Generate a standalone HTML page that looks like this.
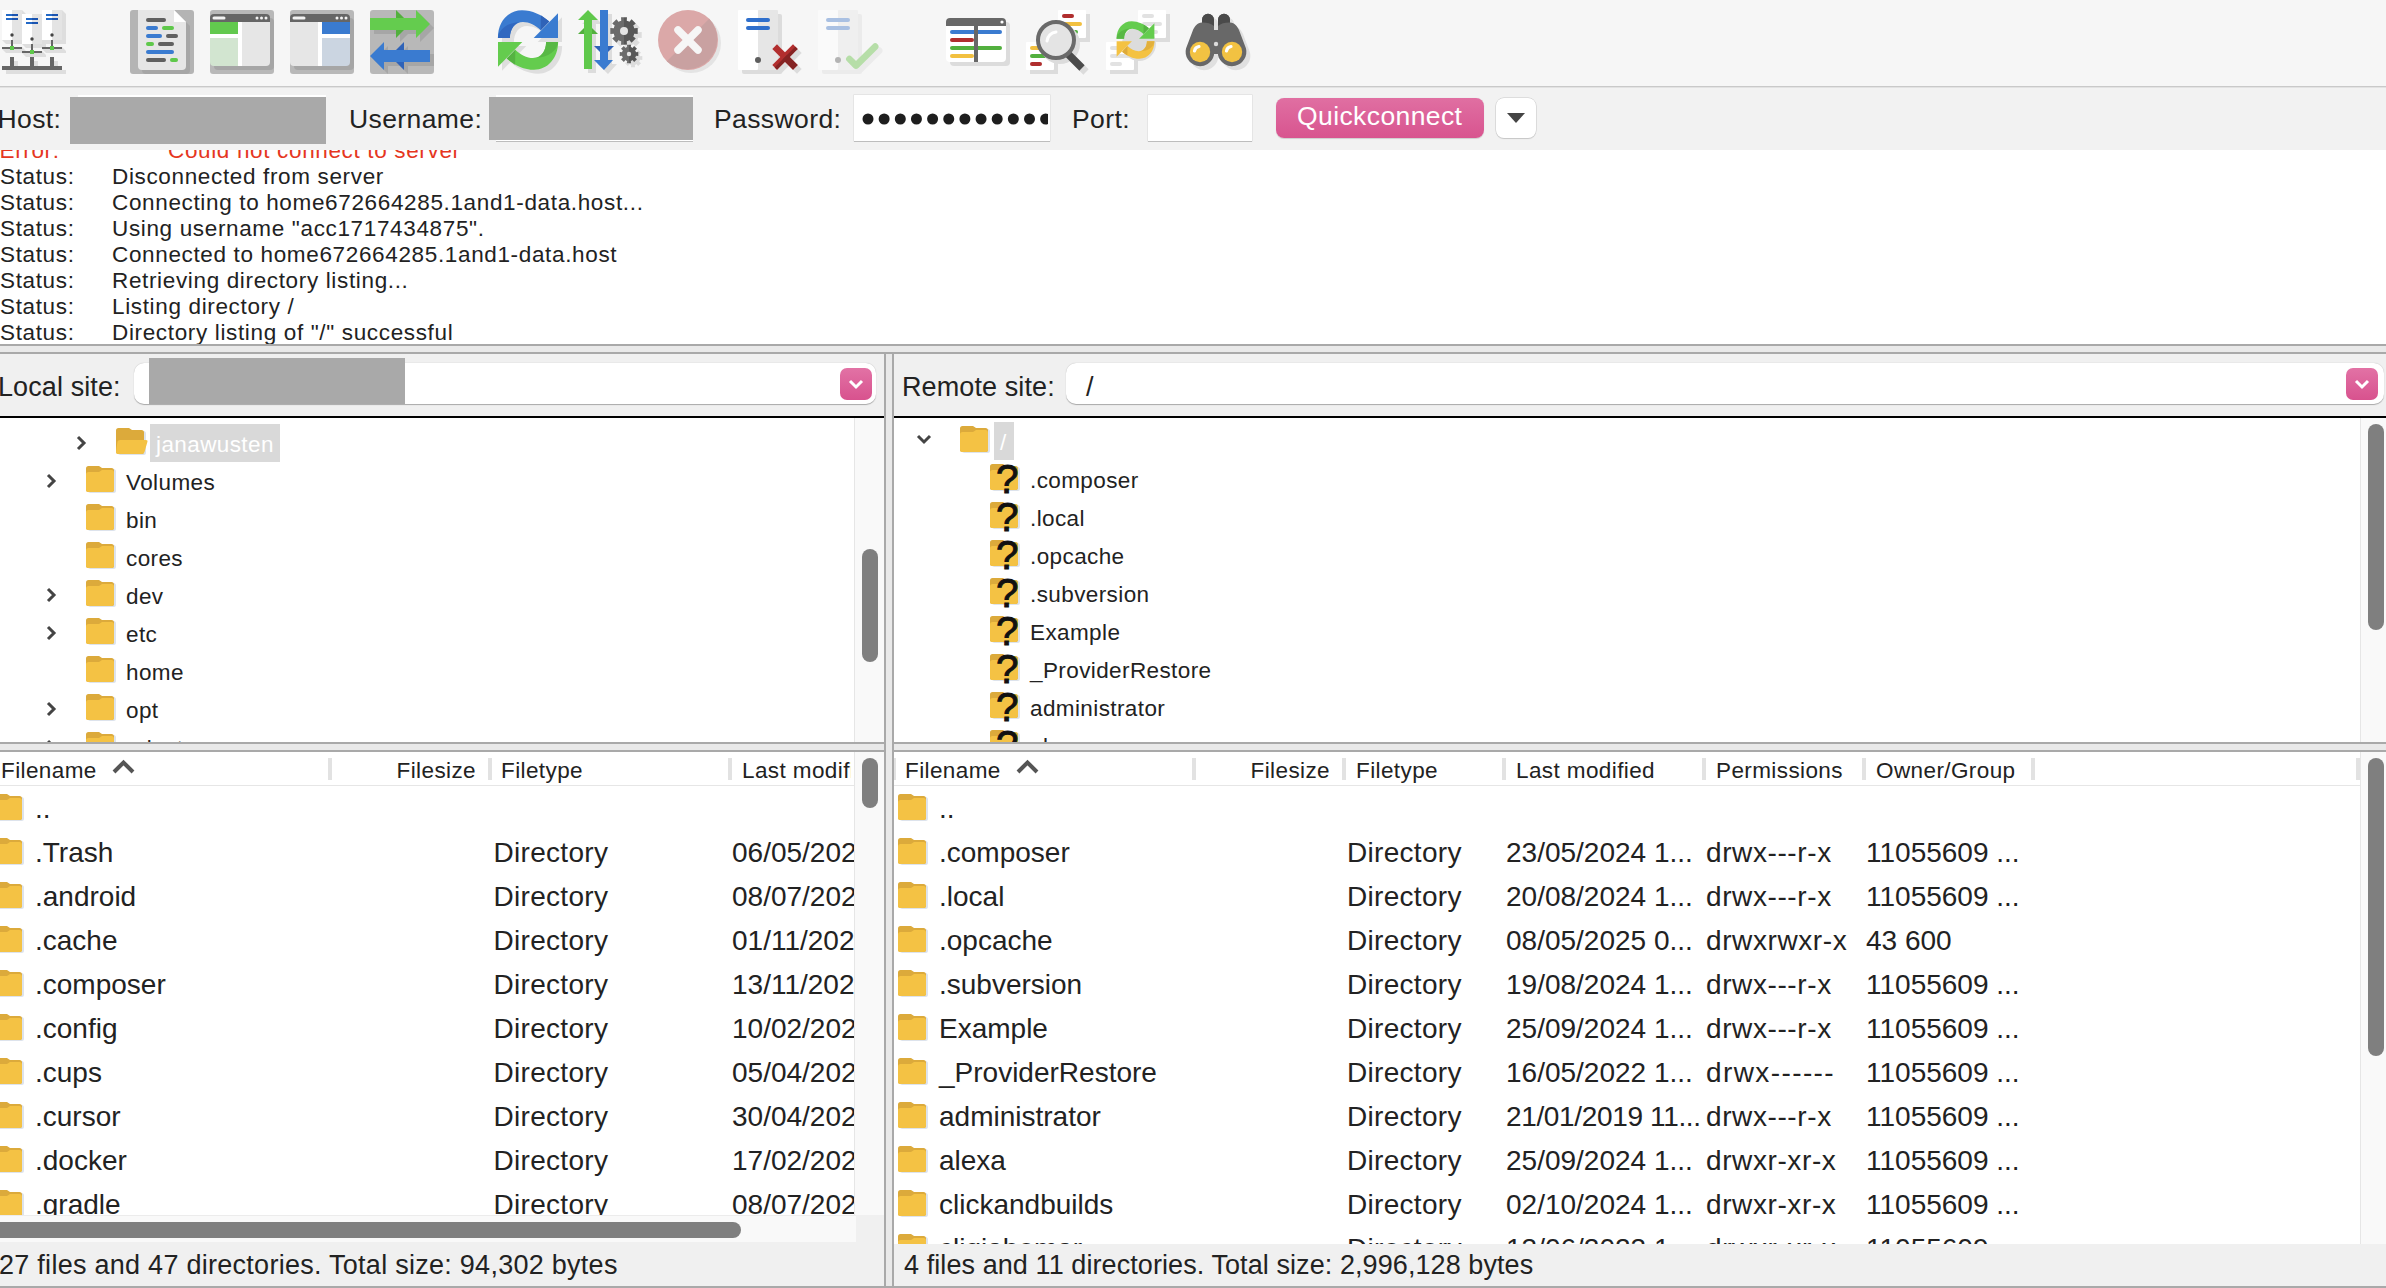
<!DOCTYPE html>
<html><head><meta charset="utf-8"><style>
html,body{margin:0;padding:0;}
body{width:2386px;height:1288px;overflow:hidden;position:relative;background:#f0f0f0;font-family:"Liberation Sans",sans-serif;color:#222;}
.t{position:absolute;white-space:pre;}
.r{position:absolute;box-sizing:border-box;}
svg.r{overflow:visible;}
</style></head><body>
<div class="r" style="left:0px;top:0px;width:2386px;height:86px;background:#f6f6f6;"></div>
<div class="r" style="left:0px;top:86px;width:2386px;height:1px;background:#c9c9c9;"></div>
<svg class="r" style="left:0px;top:10px" width="72" height="72" viewBox="0 0 72 72"><path d="M22 0 L26 4 V34 H6 L2 30 H22 Z" fill="#dedede"/><path d="M22 37 L26 41 V43 H6 L2 39 H22 Z" fill="#dedede"/><path d="M42 4 L46 8 V38 H26 L22 34 H42 Z" fill="#dedede"/><path d="M42 41 L46 45 V47 H26 L22 43 H42 Z" fill="#dedede"/><path d="M62 0 L66 4 V34 H46 L42 30 H62 Z" fill="#dedede"/><path d="M62 37 L66 41 V43 H46 L42 39 H62 Z" fill="#dedede"/><rect x="2" y="0" width="10" height="30" fill="#ffffff"/><rect x="12" y="0" width="10" height="30" fill="#e4e4e4"/><rect x="6" y="4" width="12" height="2" fill="#2268c6"/><rect x="6" y="8" width="12" height="2" fill="#2268c6"/><rect x="12" y="4" width="6" height="2" fill="#1b54b0"/><rect x="12" y="8" width="6" height="2" fill="#1b54b0"/><circle cx="12" cy="25" r="1.7" fill="#444"/><rect x="11" y="30" width="2" height="7" fill="#666666"/><rect x="2" y="37" width="20" height="2" fill="#666666"/><rect x="10" y="36" width="4" height="4" fill="#5fc84b"/><rect x="22" y="4" width="10" height="30" fill="#ffffff"/><rect x="32" y="4" width="10" height="30" fill="#e4e4e4"/><rect x="26" y="8" width="12" height="2" fill="#2268c6"/><rect x="26" y="12" width="12" height="2" fill="#2268c6"/><rect x="32" y="8" width="6" height="2" fill="#1b54b0"/><rect x="32" y="12" width="6" height="2" fill="#1b54b0"/><circle cx="32" cy="29" r="1.7" fill="#444"/><rect x="31" y="34" width="2" height="7" fill="#666666"/><rect x="22" y="41" width="20" height="2" fill="#666666"/><rect x="30" y="40" width="4" height="4" fill="#5fc84b"/><rect x="42" y="0" width="10" height="30" fill="#ffffff"/><rect x="52" y="0" width="10" height="30" fill="#e4e4e4"/><rect x="46" y="4" width="12" height="2" fill="#2268c6"/><rect x="46" y="8" width="12" height="2" fill="#2268c6"/><rect x="52" y="4" width="6" height="2" fill="#1b54b0"/><rect x="52" y="8" width="6" height="2" fill="#1b54b0"/><circle cx="52" cy="25" r="1.7" fill="#444"/><rect x="51" y="30" width="2" height="7" fill="#666666"/><rect x="42" y="37" width="20" height="2" fill="#666666"/><rect x="50" y="36" width="4" height="4" fill="#5fc84b"/><rect x="6" y="60" width="60" height="4" fill="#dedede"/><rect x="14" y="51" width="4" height="5" fill="#dedede"/><rect x="10" y="47" width="4" height="10" fill="#666666"/><rect x="34" y="51" width="4" height="5" fill="#dedede"/><rect x="30" y="47" width="4" height="10" fill="#666666"/><rect x="54" y="51" width="4" height="5" fill="#dedede"/><rect x="50" y="47" width="4" height="10" fill="#666666"/><rect x="2" y="56" width="60" height="4" fill="#666666"/></svg>
<svg class="r" style="left:130px;top:10px" width="72" height="72" viewBox="0 0 72 72"><rect x="0" y="0" width="64" height="64" rx="3" fill="#b4b4b4"/><path d="M12 4 H48 L60 16 V60 Q60 64 56 64 H16 Q12 64 12 60 Z" fill="#a6a6a6"/><path d="M8 0 H44 L56 12 V56 Q56 60 52 60 H12 Q8 60 8 56 Z" fill="#e6e6e6"/><path d="M44 0 L56 12 H44 Z" fill="#ffffff"/><line x1="18" y1="10" x2="34" y2="10" stroke="#606060" stroke-width="4" stroke-linecap="round"/><line x1="18" y1="18" x2="26" y2="18" stroke="#3a7bd0" stroke-width="4" stroke-linecap="round"/><line x1="34" y1="18" x2="42" y2="18" stroke="#5fc84b" stroke-width="4" stroke-linecap="round"/><line x1="18" y1="26" x2="30" y2="26" stroke="#3a7bd0" stroke-width="4" stroke-linecap="round"/><line x1="38" y1="26" x2="46" y2="26" stroke="#606060" stroke-width="4" stroke-linecap="round"/><line x1="18" y1="34" x2="22" y2="34" stroke="#5fc84b" stroke-width="4" stroke-linecap="round"/><line x1="30" y1="34" x2="42" y2="34" stroke="#606060" stroke-width="4" stroke-linecap="round"/><line x1="18" y1="42" x2="42" y2="42" stroke="#3a7bd0" stroke-width="4" stroke-linecap="round"/><line x1="18" y1="50" x2="34" y2="50" stroke="#606060" stroke-width="4" stroke-linecap="round"/><line x1="42" y1="50" x2="46" y2="50" stroke="#5fc84b" stroke-width="4" stroke-linecap="round"/></svg>
<svg class="r" style="left:210px;top:10px" width="72" height="72" viewBox="0 0 72 72"><rect x="0" y="0" width="64" height="64" rx="3" fill="#b8b8b8"/><rect x="4" y="8" width="60" height="52" rx="4" fill="#a6a6a6"/><path d="M0 8 Q0 4 4 4 H56 Q60 4 60 8 V12 H0 Z" fill="#666666"/><rect x="2.5" y="6.6" width="13" height="3" rx="1.5" fill="#f2f2f2"/><circle cx="47" cy="8.1" r="1.5" fill="#f2f2f2"/><circle cx="51.5" cy="8.1" r="1.5" fill="#f2f2f2"/><circle cx="56" cy="8.1" r="1.5" fill="#f2f2f2"/><rect x="0" y="12" width="28" height="12" fill="#62c94e"/><rect x="0" y="24" width="28" height="4" fill="#ffffff"/><path d="M0 28 H28 V56 H4 Q0 56 0 52 Z" fill="#d2e5d0"/><rect x="28" y="12" width="4" height="44" fill="#ffffff"/><path d="M32 12 H60 V52 Q60 56 56 56 H32 Z" fill="#e6e6e6"/></svg>
<svg class="r" style="left:290px;top:10px" width="72" height="72" viewBox="0 0 72 72"><rect x="0" y="0" width="64" height="64" rx="3" fill="#b8b8b8"/><rect x="4" y="8" width="60" height="52" rx="4" fill="#a6a6a6"/><path d="M0 8 Q0 4 4 4 H56 Q60 4 60 8 V12 H0 Z" fill="#666666"/><rect x="2.5" y="6.6" width="13" height="3" rx="1.5" fill="#f2f2f2"/><circle cx="47" cy="8.1" r="1.5" fill="#f2f2f2"/><circle cx="51.5" cy="8.1" r="1.5" fill="#f2f2f2"/><circle cx="56" cy="8.1" r="1.5" fill="#f2f2f2"/><path d="M0 12 H28 V56 H4 Q0 56 0 52 Z" fill="#e6e6e6"/><rect x="28" y="12" width="4" height="44" fill="#ffffff"/><rect x="32" y="12" width="28" height="12" fill="#3a7bd0"/><rect x="32" y="24" width="28" height="4" fill="#ffffff"/><path d="M32 28 H60 V52 Q60 56 56 56 H32 Z" fill="#cbd5e1"/></svg>
<svg class="r" style="left:370px;top:10px" width="72" height="72" viewBox="0 0 72 72"><rect x="0" y="0" width="64" height="64" rx="3" fill="#b8b8b8"/><g transform="translate(4,4)" fill="#a6a6a6"><path d="M0 8 H46 V0 L60 14 L46 28 V20 H0 Z"/><path d="M26 0 L40 14 L26 28 Z"/><path d="M60 40 H14 V32 L0 46 L14 60 V52 H60 Z"/><path d="M34 32 L20 46 L34 60 Z"/></g><path d="M26 0 L40 14 L26 28 Z" fill="#52b03e"/><path d="M0 8 H46 V0 L60 14 L46 28 V20 H0 Z" fill="#64cc4e"/><path d="M34 32 L20 46 L34 60 Z" fill="#2f63b8"/><path d="M60 40 H14 V32 L0 46 L14 60 V52 H60 Z" fill="#3a7bd0"/></svg>
<svg class="r" style="left:497px;top:10px" width="72" height="72" viewBox="0 0 72 72"><g transform="translate(4,4)" fill="#dedede"><path d="M0.9 27.9 C0.9 12 11 0.2 25 0.2 C35 0.2 45 5 52.3 11.4 L43.7 20.3 C39 15.5 32 12 26 12 C18 12 12.9 19 12.9 27.9 Z"/><path d="M36.7 27.9 H61 V3.3 Z"/><g transform="rotate(180 31 30)"><path d="M0.9 27.9 C0.9 12 11 0.2 25 0.2 C35 0.2 45 5 52.3 11.4 L43.7 20.3 C39 15.5 32 12 26 12 C18 12 12.9 19 12.9 27.9 Z"/><path d="M36.7 27.9 H61 V3.3 Z"/></g></g><path d="M0.9 27.9 C0.9 12 11 0.2 25 0.2 C35 0.2 45 5 52.3 11.4 L43.7 20.3 C39 15.5 32 12 26 12 C18 12 12.9 19 12.9 27.9 Z" fill="#3a7bd0"/><path d="M0.9 27.9 C2 19 10 12.5 24 11.9 C18 12 12.9 19 12.9 27.9 Z" fill="#3068c0"/><path d="M43.9 5.3 L52.3 11.4 L43.7 20.3 Z" fill="#2f63b8"/><path d="M36.7 27.9 H61 V3.3 Z" fill="#3a7bd0"/><g transform="rotate(180 31 30)"><path d="M0.9 27.9 C0.9 12 11 0.2 25 0.2 C35 0.2 45 5 52.3 11.4 L43.7 20.3 C39 15.5 32 12 26 12 C18 12 12.9 19 12.9 27.9 Z" fill="#64cc4e"/><path d="M0.9 27.9 C2 19 10 12.5 24 11.9 C18 12 12.9 19 12.9 27.9 Z" fill="#58b845"/><path d="M43.9 5.3 L52.3 11.4 L43.7 20.3 Z" fill="#55b342"/><path d="M36.7 27.9 H61 V3.3 Z" fill="#64cc4e"/></g></svg>
<svg class="r" style="left:577px;top:10px" width="72" height="72" viewBox="0 0 72 72"><g transform="translate(4,4)" fill="#dcdcdc"><path d="M7 10 H1 L11 0 L21 10 H15 V59 H7 Z"/><path d="M23 0 H31 V50 H36 L27 60 L17 50 H23 Z"/><path d="M57.13 18.23 L60.68 18.03 L60.68 23.97 L57.13 23.77 L56.12 26.20 L58.77 28.58 L54.58 32.77 L52.20 30.12 L49.77 31.13 L49.97 34.68 L44.03 34.68 L44.23 31.13 L41.80 30.12 L39.42 32.77 L35.23 28.58 L37.88 26.20 L36.87 23.77 L33.32 23.97 L33.32 18.03 L36.87 18.23 L37.88 15.80 L35.23 13.42 L39.42 9.23 L41.80 11.88 L44.23 10.87 L44.03 7.32 L49.97 7.32 L49.77 10.87 L52.20 11.88 L54.58 9.23 L58.77 13.42 L56.12 15.80 Z"/><circle cx="47" cy="21" r="10.5"/><path d="M58.75 42.15 L61.28 41.99 L61.28 46.01 L58.75 45.85 L58.08 47.47 L59.99 49.14 L57.14 51.99 L55.47 50.08 L53.85 50.75 L54.01 53.28 L49.99 53.28 L50.15 50.75 L48.53 50.08 L46.86 51.99 L44.01 49.14 L45.92 47.47 L45.25 45.85 L42.72 46.01 L42.72 41.99 L45.25 42.15 L45.92 40.53 L44.01 38.86 L46.86 36.01 L48.53 37.92 L50.15 37.25 L49.99 34.72 L54.01 34.72 L53.85 37.25 L55.47 37.92 L57.14 36.01 L59.99 38.86 L58.08 40.53 Z"/><circle cx="52" cy="44" r="7"/></g><path d="M1 24 L11 14 L21 24 Z" fill="#52b03e"/><path d="M7 10 H1 L11 0 L21 10 H15 V59 H7 Z" fill="#5fc84b"/><path d="M17 36 L27 46 L37 36 Z" fill="#2f63b8"/><path d="M23 0 H31 V50 H36 L27 60 L17 50 H23 Z" fill="#3a7bd0"/><path d="M57.13 18.23 L60.68 18.03 L60.68 23.97 L57.13 23.77 L56.12 26.20 L58.77 28.58 L54.58 32.77 L52.20 30.12 L49.77 31.13 L49.97 34.68 L44.03 34.68 L44.23 31.13 L41.80 30.12 L39.42 32.77 L35.23 28.58 L37.88 26.20 L36.87 23.77 L33.32 23.97 L33.32 18.03 L36.87 18.23 L37.88 15.80 L35.23 13.42 L39.42 9.23 L41.80 11.88 L44.23 10.87 L44.03 7.32 L49.97 7.32 L49.77 10.87 L52.20 11.88 L54.58 9.23 L58.77 13.42 L56.12 15.80 Z" fill="#575757"/><circle cx="47" cy="21" r="10.5" fill="#575757"/><path d="M47 6 A15 15 0 0 0 47 36 Z" fill="#ffffff" opacity="0.12"/><circle cx="47" cy="21" r="4" fill="#e4e4e4"/><path d="M58.75 42.15 L61.28 41.99 L61.28 46.01 L58.75 45.85 L58.08 47.47 L59.99 49.14 L57.14 51.99 L55.47 50.08 L53.85 50.75 L54.01 53.28 L49.99 53.28 L50.15 50.75 L48.53 50.08 L46.86 51.99 L44.01 49.14 L45.92 47.47 L45.25 45.85 L42.72 46.01 L42.72 41.99 L45.25 42.15 L45.92 40.53 L44.01 38.86 L46.86 36.01 L48.53 37.92 L50.15 37.25 L49.99 34.72 L54.01 34.72 L53.85 37.25 L55.47 37.92 L57.14 36.01 L59.99 38.86 L58.08 40.53 Z" fill="#575757"/><circle cx="52" cy="44" r="7" fill="#575757"/><path d="M52 33.5 A10.5 10.5 0 0 0 52 54.5 Z" fill="#ffffff" opacity="0.12"/><circle cx="52" cy="44" r="2.2" fill="#e4e4e4"/></svg>
<svg class="r" style="left:657px;top:10px" width="72" height="72" viewBox="0 0 72 72"><circle cx="34" cy="33" r="30" fill="#e4e4e4"/><circle cx="31" cy="30" r="30" fill="#dba8a8"/><path d="M52.2 8.8 A30 30 0 0 1 9.8 51.2 Z" fill="#c9a1a1"/><g stroke="#f6f6f6" stroke-width="7.5" stroke-linecap="round"><line x1="21" y1="20" x2="41" y2="40"/><line x1="41" y1="20" x2="21" y2="40"/></g></svg>
<svg class="r" style="left:737px;top:10px" width="72" height="72" viewBox="0 0 72 72"><rect x="5" y="4" width="40" height="60" rx="2" fill="#dcdcdc"/><rect x="1" y="0" width="20" height="60" rx="1" fill="#ffffff"/><rect x="21" y="0" width="20" height="60" rx="1" fill="#e6e6e6"/><line x1="11" y1="10" x2="31" y2="10" stroke="#2f6fcc" stroke-width="4" stroke-linecap="round"/><line x1="11" y1="18" x2="31" y2="18" stroke="#2f6fcc" stroke-width="4" stroke-linecap="round"/><circle cx="21" cy="50" r="3" fill="#5e5e5e"/><g stroke="#dcdcdc" stroke-width="6.6" stroke-linecap="square" stroke-linejoin="round" transform="translate(4,4)"><line x1="40" y1="39" x2="56" y2="55"/><line x1="56" y1="39" x2="40" y2="55"/></g><defs><clipPath id="dxc"><path d="M70 25 L26 69 H70 Z"/></clipPath></defs><g stroke="#b22e2e" stroke-width="6.6" stroke-linecap="square"><line x1="40" y1="39" x2="56" y2="55"/><line x1="56" y1="39" x2="40" y2="55"/></g><g stroke="#852323" stroke-width="6.6" stroke-linecap="square" clip-path="url(#dxc)"><line x1="40" y1="39" x2="56" y2="55"/><line x1="56" y1="39" x2="40" y2="55"/></g></svg>
<svg class="r" style="left:817px;top:10px" width="72" height="72" viewBox="0 0 72 72"><rect x="5" y="4" width="40" height="60" rx="2" fill="#ebebeb"/><rect x="1" y="0" width="20" height="60" rx="1" fill="#fafafa"/><rect x="21" y="0" width="20" height="60" rx="1" fill="#efefef"/><line x1="11" y1="10" x2="31" y2="10" stroke="#a9c0e2" stroke-width="4" stroke-linecap="round"/><line x1="11" y1="18" x2="31" y2="18" stroke="#a9c0e2" stroke-width="4" stroke-linecap="round"/><circle cx="21" cy="50" r="3" fill="#b4b4b4"/><path d="M32.4 49 L39 55.6 L58.2 36.6" stroke="#ebebeb" stroke-width="6.6" fill="none" stroke-linecap="round" stroke-linejoin="round" transform="translate(4,4)"/><path d="M32.4 49 L39 55.6 L58.2 36.6" stroke="#b6dea8" stroke-width="6.6" fill="none" stroke-linecap="round" stroke-linejoin="round"/></svg>
<svg class="r" style="left:945px;top:10px" width="72" height="72" viewBox="0 0 72 72"><rect x="5" y="12" width="60" height="44" rx="4" fill="#dcdcdc"/><rect x="1" y="8" width="60" height="44" rx="4" fill="#ffffff"/><path d="M1 16 V12 Q1 8 5 8 H57 Q61 8 61 12 V16 Z" fill="#686868"/><circle cx="57" cy="12" r="1.6" fill="#ffffff"/><line x1="7" y1="22" x2="55" y2="22" stroke="#3a7bd0" stroke-width="4" stroke-linecap="round"/><line x1="7" y1="30" x2="27" y2="30" stroke="#b02e2e" stroke-width="4" stroke-linecap="round"/><line x1="7" y1="38" x2="55" y2="38" stroke="#52b03e" stroke-width="4" stroke-linecap="round"/><line x1="7" y1="46" x2="27" y2="46" stroke="#f2c040" stroke-width="4" stroke-linecap="round"/><rect x="29" y="16" width="4" height="36" fill="#686868"/></svg>
<svg class="r" style="left:1025px;top:10px" width="72" height="72" viewBox="0 0 72 72"><rect x="37" y="4" width="28" height="28" fill="#dcdcdc"/><rect x="33" y="0" width="28" height="28" rx="1" fill="#ffffff"/><line x1="39" y1="6" x2="47" y2="6" stroke="#b02e2e" stroke-width="4" stroke-linecap="round"/><line x1="39" y1="14" x2="55" y2="14" stroke="#f2c040" stroke-width="4" stroke-linecap="round"/><line x1="39" y1="22" x2="51" y2="22" stroke="#52b03e" stroke-width="4" stroke-linecap="round"/><rect x="5" y="36" width="28" height="28" fill="#dcdcdc"/><rect x="1" y="32" width="28" height="28" rx="1" fill="#ffffff"/><line x1="7" y1="38" x2="23" y2="38" stroke="#f2c040" stroke-width="4" stroke-linecap="round"/><line x1="7" y1="46" x2="27" y2="46" stroke="#52b03e" stroke-width="4" stroke-linecap="round"/><line x1="7" y1="54" x2="15" y2="54" stroke="#b02e2e" stroke-width="4" stroke-linecap="round"/><circle cx="35" cy="34" r="20" fill="#dcdcdc"/><line x1="47" y1="48" x2="61" y2="62" stroke="#dcdcdc" stroke-width="7.5"/><line x1="43" y1="44" x2="57" y2="58" stroke="#4b4b4b" stroke-width="7.5"/><circle cx="31" cy="30" r="18" fill="#e4e4e4" stroke="#6a6a6a" stroke-width="4"/><path d="M22 31 A10 10 0 0 1 31 22" stroke="#ffffff" stroke-width="3" fill="none" stroke-linecap="round"/></svg>
<svg class="r" style="left:1105px;top:10px" width="72" height="72" viewBox="0 0 72 72"><rect x="37" y="4" width="28" height="28" fill="#dcdcdc"/><rect x="33" y="0" width="28" height="28" rx="1" fill="#ffffff"/><line x1="39" y1="6" x2="47" y2="6" stroke="#e2e2e2" stroke-width="4" stroke-linecap="round"/><line x1="39" y1="14" x2="55" y2="14" stroke="#e2e2e2" stroke-width="4" stroke-linecap="round"/><line x1="39" y1="22" x2="51" y2="22" stroke="#e2e2e2" stroke-width="4" stroke-linecap="round"/><rect x="5" y="36" width="28" height="28" fill="#dcdcdc"/><rect x="1" y="32" width="28" height="28" rx="1" fill="#ffffff"/><line x1="7" y1="38" x2="15" y2="38" stroke="#e2e2e2" stroke-width="4" stroke-linecap="round"/><line x1="7" y1="46" x2="23" y2="46" stroke="#e2e2e2" stroke-width="4" stroke-linecap="round"/><line x1="7" y1="54" x2="15" y2="54" stroke="#e2e2e2" stroke-width="4" stroke-linecap="round"/><circle cx="34" cy="34" r="17" fill="#dcdcdc"/><g transform="translate(30.5,30) scale(0.63) translate(-31,-30)"><path d="M0.9 27.9 C0.9 12 11 0.2 25 0.2 C35 0.2 45 5 52.3 11.4 L43.7 20.3 C39 15.5 32 12 26 12 C18 12 12.9 19 12.9 27.9 Z" fill="#64cc4e"/><path d="M0.9 27.9 C2 19 10 12.5 24 11.9 C18 12 12.9 19 12.9 27.9 Z" fill="#58b845"/><path d="M43.9 5.3 L52.3 11.4 L43.7 20.3 Z" fill="#55b342"/><path d="M36.7 27.9 H61 V3.3 Z" fill="#64cc4e"/><g transform="rotate(180 31 30)"><path d="M0.9 27.9 C0.9 12 11 0.2 25 0.2 C35 0.2 45 5 52.3 11.4 L43.7 20.3 C39 15.5 32 12 26 12 C18 12 12.9 19 12.9 27.9 Z" fill="#f4c242"/><path d="M0.9 27.9 C2 19 10 12.5 24 11.9 C18 12 12.9 19 12.9 27.9 Z" fill="#e2b03c"/><path d="M43.9 5.3 L52.3 11.4 L43.7 20.3 Z" fill="#deaa3a"/><path d="M36.7 27.9 H61 V3.3 Z" fill="#f4c242"/></g></g></svg>
<svg class="r" style="left:1185px;top:10px" width="72" height="72" viewBox="0 0 72 72"><g transform="translate(4,4)"><path d="M17 9.7 A6 6 0 0 1 29 9.7 V20 H33 V9.7 A6 6 0 0 1 45 9.7 V12.5 C50 13 52 16 54 20 L61 38.5 A14.2 14.2 0 0 1 33 45 V44 H29 V45 A14.2 14.2 0 0 1 1 38.5 L8 20 C10 16 12 13 17 12.5 Z" fill="#e0e0e0"/></g><path d="M17 9.7 A6 6 0 0 1 29 9.7 V20 H33 V9.7 A6 6 0 0 1 45 9.7 V12.5 C50 13 52 16 54 20 L61 38.5 A14.2 14.2 0 0 1 33 45 V44 H29 V45 A14.2 14.2 0 0 1 1 38.5 L8 20 C10 16 12 13 17 12.5 Z" fill="#686868"/><path d="M17 9.7 A6 6 0 0 1 29 9.7 V16 C26 13.5 22 12.4 17 12.5 Z" fill="#4a4a4a"/><path d="M45 9.7 A6 6 0 0 0 33 9.7 V16 C36 13.5 40 12.4 45 12.5 Z" fill="#4a4a4a"/><circle cx="31" cy="34" r="2.2" fill="#dcdcdc"/><circle cx="15" cy="42" r="10.2" fill="#f2c242"/><path d="M9.5 41 A5.5 5.5 0 0 1 14 36.5" stroke="#ffffff" stroke-width="3.2" fill="none" stroke-linecap="round"/><circle cx="47" cy="42" r="10.2" fill="#f2c242"/><path d="M41.5 41 A5.5 5.5 0 0 1 46 36.5" stroke="#ffffff" stroke-width="3.2" fill="none" stroke-linecap="round"/></svg>
<div class="r" style="left:0px;top:150px;width:2386px;height:194px;overflow:hidden;background:#ffffff;">
<div class="t" style="left:-0.5px;top:-10.45px;font-size:22.5px;line-height:22.5px;color:#e5371f;letter-spacing:0.65px;">Error:</div>
<div class="t" style="left:168px;top:-10.45px;font-size:22.5px;line-height:22.5px;color:#e5371f;letter-spacing:0.65px;">Could not connect to server</div>
<div class="t" style="left:0px;top:15.55px;font-size:22.5px;line-height:22.5px;letter-spacing:0.65px;">Status:</div>
<div class="t" style="left:112px;top:15.55px;font-size:22.5px;line-height:22.5px;letter-spacing:0.65px;">Disconnected from server</div>
<div class="t" style="left:0px;top:41.55px;font-size:22.5px;line-height:22.5px;letter-spacing:0.65px;">Status:</div>
<div class="t" style="left:112px;top:41.55px;font-size:22.5px;line-height:22.5px;letter-spacing:0.65px;">Connecting to home672664285.1and1-data.host...</div>
<div class="t" style="left:0px;top:67.55px;font-size:22.5px;line-height:22.5px;letter-spacing:0.65px;">Status:</div>
<div class="t" style="left:112px;top:67.55px;font-size:22.5px;line-height:22.5px;letter-spacing:0.65px;">Using username "acc1717434875".</div>
<div class="t" style="left:0px;top:93.55px;font-size:22.5px;line-height:22.5px;letter-spacing:0.65px;">Status:</div>
<div class="t" style="left:112px;top:93.55px;font-size:22.5px;line-height:22.5px;letter-spacing:0.65px;">Connected to home672664285.1and1-data.host</div>
<div class="t" style="left:0px;top:119.55px;font-size:22.5px;line-height:22.5px;letter-spacing:0.65px;">Status:</div>
<div class="t" style="left:112px;top:119.55px;font-size:22.5px;line-height:22.5px;letter-spacing:0.65px;">Retrieving directory listing...</div>
<div class="t" style="left:0px;top:145.55px;font-size:22.5px;line-height:22.5px;letter-spacing:0.65px;">Status:</div>
<div class="t" style="left:112px;top:145.55px;font-size:22.5px;line-height:22.5px;letter-spacing:0.65px;">Listing directory /</div>
<div class="t" style="left:0px;top:171.55px;font-size:22.5px;line-height:22.5px;letter-spacing:0.65px;">Status:</div>
<div class="t" style="left:112px;top:171.55px;font-size:22.5px;line-height:22.5px;letter-spacing:0.65px;">Directory listing of "/" successful</div>
</div>
<div class="r" style="left:0px;top:87px;width:2386px;height:63px;overflow:hidden;background:#f2f2f2;">
<div class="r" style="left:0px;top:0px;width:2386px;height:1px;background:#e2e2e2;"></div>
<div class="t" style="left:-2.5px;top:18.56px;font-size:26.5px;line-height:26.5px;letter-spacing:0.4px;">Host:</div>
<div class="r" style="left:78px;top:8px;width:248px;height:46px;background:#ffffff;box-shadow:0 1px 0 #bdbdbd;"></div>
<div class="r" style="left:70px;top:10px;width:256px;height:47px;background:#a9a9a9;"></div>
<div class="t" style="left:349px;top:18.56px;font-size:26.5px;line-height:26.5px;letter-spacing:0.4px;">Username:</div>
<div class="r" style="left:496px;top:8px;width:197px;height:46px;background:#ffffff;box-shadow:0 1px 0 #bdbdbd;"></div>
<div class="r" style="left:489px;top:10px;width:204px;height:43px;background:#a9a9a9;"></div>
<div class="t" style="left:714px;top:18.56px;font-size:26.5px;line-height:26.5px;letter-spacing:0.4px;">Password:</div>
<div class="r" style="left:854px;top:8px;width:196px;height:46px;background:#ffffff;box-shadow:0 1px 0 #bdbdbd, 0 0 0 0.5px #d8d8d8;"></div>
<div class="r" style="left:855px;top:13px;width:193px;height:40px;overflow:hidden;">
<svg class="r" style="left:7px;top:12.5px" width="200" height="12" viewBox="0 0 200 12"><circle cx="6.0" cy="6" r="5.5" fill="#1e1e1e"/><circle cx="22.15" cy="6" r="5.5" fill="#1e1e1e"/><circle cx="38.3" cy="6" r="5.5" fill="#1e1e1e"/><circle cx="54.449999999999996" cy="6" r="5.5" fill="#1e1e1e"/><circle cx="70.6" cy="6" r="5.5" fill="#1e1e1e"/><circle cx="86.75" cy="6" r="5.5" fill="#1e1e1e"/><circle cx="102.89999999999999" cy="6" r="5.5" fill="#1e1e1e"/><circle cx="119.04999999999998" cy="6" r="5.5" fill="#1e1e1e"/><circle cx="135.2" cy="6" r="5.5" fill="#1e1e1e"/><circle cx="151.35" cy="6" r="5.5" fill="#1e1e1e"/><circle cx="167.5" cy="6" r="5.5" fill="#1e1e1e"/><circle cx="183.64999999999998" cy="6" r="5.5" fill="#1e1e1e"/></svg>
</div>
<div class="t" style="left:1072px;top:18.56px;font-size:26.5px;line-height:26.5px;letter-spacing:0.4px;">Port:</div>
<div class="r" style="left:1148px;top:8px;width:104px;height:46px;background:#ffffff;box-shadow:0 1px 0 #bdbdbd, 0 0 0 0.5px #d8d8d8;"></div>
<div class="r" style="left:1276px;top:11px;width:208px;height:40px;background:linear-gradient(#e06fa2,#d8548f);border-radius:8px;box-shadow:0 0.5px 1px rgba(0,0,0,0.15);"></div>
<div class="t" style="left:1297px;top:16.16px;font-size:26.5px;line-height:26.5px;color:#ffffff;letter-spacing:0.4px;">Quickconnect</div>
<div class="r" style="left:1496px;top:11px;width:40px;height:40px;background:#ffffff;border-radius:8px;box-shadow:0 0 0 0.5px #c8c8c8, 0 1px 1px rgba(0,0,0,0.18);"></div>
<svg class="r" style="left:1506px;top:25px" width="20" height="12" viewBox="0 0 20 12"><path d="M1 1 L19 1 L10 11 Z" fill="#444"/></svg>
</div>
<div class="r" style="left:0px;top:344px;width:2386px;height:2px;background:#a9a9a9;"></div>
<div class="r" style="left:0px;top:346px;width:2386px;height:6px;background:#e9e9e9;"></div>
<div class="r" style="left:0px;top:352px;width:2386px;height:2px;background:#a9a9a9;"></div>
<div class="r" style="left:884px;top:354px;width:2px;height:932px;background:#a9a9a9;"></div>
<div class="r" style="left:886px;top:354px;width:6px;height:932px;background:#e9e9e9;"></div>
<div class="r" style="left:892px;top:354px;width:2px;height:932px;background:#a9a9a9;"></div>
<div class="r" style="left:0px;top:354px;width:884px;height:62px;overflow:hidden;background:#f0f0f0;">
<div class="t" style="left:-2px;top:20.14px;font-size:27px;line-height:27px;letter-spacing:0.1px;">Local site:</div>
<div class="r" style="left:134px;top:9px;width:742px;height:41px;background:#ffffff;border-radius:10px;box-shadow:0 0.5px 1px rgba(0,0,0,0.3);"></div>
<div class="r" style="left:149px;top:4px;width:256px;height:46px;background:#a9a9a9;"></div>
<div class="r" style="left:840px;top:14px;width:32px;height:32px;background:linear-gradient(#e272a5,#d8528e);border-radius:7px;"></div>
<svg class="r" style="left:848px;top:25px" width="16" height="10" viewBox="0 0 16 10"><path d="M2 2 L8 8 L14 2" stroke="#fff" stroke-width="3" fill="none"/></svg>
</div>
<div class="r" style="left:0px;top:416px;width:884px;height:2px;background:#000000;"></div>
<div class="r" style="left:894px;top:354px;width:1492px;height:62px;overflow:hidden;background:#f0f0f0;">
<div class="t" style="left:8px;top:20.14px;font-size:27px;line-height:27px;letter-spacing:0.1px;">Remote site:</div>
<div class="r" style="left:172px;top:9px;width:1318px;height:41px;background:#ffffff;border-radius:10px;box-shadow:0 0.5px 1px rgba(0,0,0,0.3);"></div>
<div class="t" style="left:192px;top:20.14px;font-size:27px;line-height:27px;letter-spacing:0.1px;">/</div>
<div class="r" style="left:1452px;top:14px;width:32px;height:32px;background:linear-gradient(#e272a5,#d8528e);border-radius:7px;"></div>
<svg class="r" style="left:1460px;top:25px" width="16" height="10" viewBox="0 0 16 10"><path d="M2 2 L8 8 L14 2" stroke="#fff" stroke-width="3" fill="none"/></svg>
</div>
<div class="r" style="left:894px;top:416px;width:1492px;height:2px;background:#000000;"></div>
<div class="r" style="left:0px;top:418px;width:884px;height:324px;overflow:hidden;background:#ffffff;">
<div class="r" style="left:854px;top:0px;width:30px;height:324px;background:#f9f9f9;border-left:1px solid #e6e6e6;"></div>
<div class="r" style="left:862px;top:131px;width:16px;height:113px;background:#7f7f7f;border-radius:8px;"></div>
<svg class="r" style="left:76px;top:17px" width="12" height="18" viewBox="0 0 12 18"><path d="M2 2 L8 8 L2 14" stroke="#444" stroke-width="3" fill="none"/></svg>
<svg class="r" style="left:116px;top:10px" width="34" height="30" viewBox="0 0 34 30"><rect x="2" y="3" width="28" height="24" rx="2.5" fill="#dde3ec"/><path d="M0 2.5 Q0 0 2.5 0 H13 L16 2 H25.5 Q28 2 28 4.5 V23.5 Q28 26 25.5 26 H2.5 Q0 26 0 23.5 Z" fill="#dcaa3b"/><path d="M1.5 13.5 Q2 12 4 12 H30 Q32 12 31.5 13.5 L28.5 24 Q28 26 25.5 26 H2.5 Q0 26 0 23.5 Z" fill="#f4c244"/></svg>
<div class="r" style="left:150px;top:6px;width:130px;height:38px;background:#d9d9d9;"></div>
<div class="t" style="left:156px;top:15.55px;font-size:22.5px;line-height:22.5px;color:#ffffff;letter-spacing:0.4px;">janawusten</div>
<svg class="r" style="left:46px;top:55px" width="12" height="18" viewBox="0 0 12 18"><path d="M2 2 L8 8 L2 14" stroke="#444" stroke-width="3" fill="none"/></svg>
<svg class="r" style="left:86px;top:48px" width="34" height="30" viewBox="0 0 34 30"><rect x="2" y="3" width="28" height="24" rx="2.5" fill="#dde3ec"/><path d="M0 2.5 Q0 0 2.5 0 H13 L16 2 H25.5 Q28 2 28 4.5 V23.5 Q28 26 25.5 26 H2.5 Q0 26 0 23.5 Z" fill="#dcaa3b"/><path d="M0 8.5 Q0 6 2.5 6 H13 L16 4 H25.5 Q28 4 28 6.5 V23.5 Q28 26 25.5 26 H2.5 Q0 26 0 23.5 Z" fill="#f4c244"/></svg>
<div class="t" style="left:126px;top:53.55px;font-size:22.5px;line-height:22.5px;letter-spacing:0.4px;">Volumes</div>
<svg class="r" style="left:86px;top:86px" width="34" height="30" viewBox="0 0 34 30"><rect x="2" y="3" width="28" height="24" rx="2.5" fill="#dde3ec"/><path d="M0 2.5 Q0 0 2.5 0 H13 L16 2 H25.5 Q28 2 28 4.5 V23.5 Q28 26 25.5 26 H2.5 Q0 26 0 23.5 Z" fill="#dcaa3b"/><path d="M0 8.5 Q0 6 2.5 6 H13 L16 4 H25.5 Q28 4 28 6.5 V23.5 Q28 26 25.5 26 H2.5 Q0 26 0 23.5 Z" fill="#f4c244"/></svg>
<div class="t" style="left:126px;top:91.55px;font-size:22.5px;line-height:22.5px;letter-spacing:0.4px;">bin</div>
<svg class="r" style="left:86px;top:124px" width="34" height="30" viewBox="0 0 34 30"><rect x="2" y="3" width="28" height="24" rx="2.5" fill="#dde3ec"/><path d="M0 2.5 Q0 0 2.5 0 H13 L16 2 H25.5 Q28 2 28 4.5 V23.5 Q28 26 25.5 26 H2.5 Q0 26 0 23.5 Z" fill="#dcaa3b"/><path d="M0 8.5 Q0 6 2.5 6 H13 L16 4 H25.5 Q28 4 28 6.5 V23.5 Q28 26 25.5 26 H2.5 Q0 26 0 23.5 Z" fill="#f4c244"/></svg>
<div class="t" style="left:126px;top:129.55px;font-size:22.5px;line-height:22.5px;letter-spacing:0.4px;">cores</div>
<svg class="r" style="left:46px;top:169px" width="12" height="18" viewBox="0 0 12 18"><path d="M2 2 L8 8 L2 14" stroke="#444" stroke-width="3" fill="none"/></svg>
<svg class="r" style="left:86px;top:162px" width="34" height="30" viewBox="0 0 34 30"><rect x="2" y="3" width="28" height="24" rx="2.5" fill="#dde3ec"/><path d="M0 2.5 Q0 0 2.5 0 H13 L16 2 H25.5 Q28 2 28 4.5 V23.5 Q28 26 25.5 26 H2.5 Q0 26 0 23.5 Z" fill="#dcaa3b"/><path d="M0 8.5 Q0 6 2.5 6 H13 L16 4 H25.5 Q28 4 28 6.5 V23.5 Q28 26 25.5 26 H2.5 Q0 26 0 23.5 Z" fill="#f4c244"/></svg>
<div class="t" style="left:126px;top:167.55px;font-size:22.5px;line-height:22.5px;letter-spacing:0.4px;">dev</div>
<svg class="r" style="left:46px;top:207px" width="12" height="18" viewBox="0 0 12 18"><path d="M2 2 L8 8 L2 14" stroke="#444" stroke-width="3" fill="none"/></svg>
<svg class="r" style="left:86px;top:200px" width="34" height="30" viewBox="0 0 34 30"><rect x="2" y="3" width="28" height="24" rx="2.5" fill="#dde3ec"/><path d="M0 2.5 Q0 0 2.5 0 H13 L16 2 H25.5 Q28 2 28 4.5 V23.5 Q28 26 25.5 26 H2.5 Q0 26 0 23.5 Z" fill="#dcaa3b"/><path d="M0 8.5 Q0 6 2.5 6 H13 L16 4 H25.5 Q28 4 28 6.5 V23.5 Q28 26 25.5 26 H2.5 Q0 26 0 23.5 Z" fill="#f4c244"/></svg>
<div class="t" style="left:126px;top:205.55px;font-size:22.5px;line-height:22.5px;letter-spacing:0.4px;">etc</div>
<svg class="r" style="left:86px;top:238px" width="34" height="30" viewBox="0 0 34 30"><rect x="2" y="3" width="28" height="24" rx="2.5" fill="#dde3ec"/><path d="M0 2.5 Q0 0 2.5 0 H13 L16 2 H25.5 Q28 2 28 4.5 V23.5 Q28 26 25.5 26 H2.5 Q0 26 0 23.5 Z" fill="#dcaa3b"/><path d="M0 8.5 Q0 6 2.5 6 H13 L16 4 H25.5 Q28 4 28 6.5 V23.5 Q28 26 25.5 26 H2.5 Q0 26 0 23.5 Z" fill="#f4c244"/></svg>
<div class="t" style="left:126px;top:243.55px;font-size:22.5px;line-height:22.5px;letter-spacing:0.4px;">home</div>
<svg class="r" style="left:46px;top:283px" width="12" height="18" viewBox="0 0 12 18"><path d="M2 2 L8 8 L2 14" stroke="#444" stroke-width="3" fill="none"/></svg>
<svg class="r" style="left:86px;top:276px" width="34" height="30" viewBox="0 0 34 30"><rect x="2" y="3" width="28" height="24" rx="2.5" fill="#dde3ec"/><path d="M0 2.5 Q0 0 2.5 0 H13 L16 2 H25.5 Q28 2 28 4.5 V23.5 Q28 26 25.5 26 H2.5 Q0 26 0 23.5 Z" fill="#dcaa3b"/><path d="M0 8.5 Q0 6 2.5 6 H13 L16 4 H25.5 Q28 4 28 6.5 V23.5 Q28 26 25.5 26 H2.5 Q0 26 0 23.5 Z" fill="#f4c244"/></svg>
<div class="t" style="left:126px;top:281.55px;font-size:22.5px;line-height:22.5px;letter-spacing:0.4px;">opt</div>
<svg class="r" style="left:46px;top:321px" width="12" height="18" viewBox="0 0 12 18"><path d="M2 2 L8 8 L2 14" stroke="#444" stroke-width="3" fill="none"/></svg>
<svg class="r" style="left:86px;top:314px" width="34" height="30" viewBox="0 0 34 30"><rect x="2" y="3" width="28" height="24" rx="2.5" fill="#dde3ec"/><path d="M0 2.5 Q0 0 2.5 0 H13 L16 2 H25.5 Q28 2 28 4.5 V23.5 Q28 26 25.5 26 H2.5 Q0 26 0 23.5 Z" fill="#dcaa3b"/><path d="M0 8.5 Q0 6 2.5 6 H13 L16 4 H25.5 Q28 4 28 6.5 V23.5 Q28 26 25.5 26 H2.5 Q0 26 0 23.5 Z" fill="#f4c244"/></svg>
<div class="t" style="left:126px;top:319.55px;font-size:22.5px;line-height:22.5px;letter-spacing:0.4px;">private</div>
</div>
<div class="r" style="left:0px;top:742px;width:884px;height:2px;background:#a9a9a9;"></div>
<div class="r" style="left:0px;top:744px;width:884px;height:6px;background:#e9e9e9;"></div>
<div class="r" style="left:0px;top:750px;width:884px;height:2px;background:#a9a9a9;"></div>
<div class="r" style="left:894px;top:418px;width:1492px;height:324px;overflow:hidden;background:#ffffff;">
<div class="r" style="left:1466px;top:0px;width:26px;height:324px;background:#f9f9f9;border-left:1px solid #e6e6e6;"></div>
<div class="r" style="left:1474px;top:6px;width:16px;height:206px;background:#7f7f7f;border-radius:8px;"></div>
<svg class="r" style="left:22px;top:16px" width="18" height="12" viewBox="0 0 18 12"><path d="M2 2 L8 8 L14 2" stroke="#444" stroke-width="3" fill="none"/></svg>
<svg class="r" style="left:66px;top:8px" width="34" height="30" viewBox="0 0 34 30"><rect x="2" y="3" width="28" height="24" rx="2.5" fill="#dde3ec"/><path d="M0 2.5 Q0 0 2.5 0 H13 L16 2 H25.5 Q28 2 28 4.5 V23.5 Q28 26 25.5 26 H2.5 Q0 26 0 23.5 Z" fill="#dcaa3b"/><path d="M0 8.5 Q0 6 2.5 6 H13 L16 4 H25.5 Q28 4 28 6.5 V23.5 Q28 26 25.5 26 H2.5 Q0 26 0 23.5 Z" fill="#f4c244"/></svg>
<div class="r" style="left:100px;top:4px;width:20px;height:38px;background:#d9d9d9;"></div>
<div class="t" style="left:106px;top:13.55px;font-size:22.5px;line-height:22.5px;color:#ffffff;letter-spacing:0.4px;">/</div>
<svg class="r" style="left:96px;top:46px" width="34" height="34" viewBox="0 0 34 34"><rect x="2" y="3" width="28" height="24" rx="2.5" fill="#dde3ec"/><path d="M0 2.5 Q0 0 2.5 0 H13 L16 2 H25.5 Q28 2 28 4.5 V23.5 Q28 26 25.5 26 H2.5 Q0 26 0 23.5 Z" fill="#dcaa3b"/><path d="M0 8.5 Q0 6 2.5 6 H13 L16 4 H25.5 Q28 4 28 6.5 V23.5 Q28 26 25.5 26 H2.5 Q0 26 0 23.5 Z" fill="#f4c244"/><text x="17.3" y="29.2" text-anchor="middle" font-family="Liberation Sans" font-size="40.5" fill="#111" stroke="#111" stroke-width="0.9" style="paint-order:stroke">?</text></svg>
<div class="t" style="left:136px;top:51.55px;font-size:22.5px;line-height:22.5px;letter-spacing:0.4px;">.composer</div>
<svg class="r" style="left:96px;top:84px" width="34" height="34" viewBox="0 0 34 34"><rect x="2" y="3" width="28" height="24" rx="2.5" fill="#dde3ec"/><path d="M0 2.5 Q0 0 2.5 0 H13 L16 2 H25.5 Q28 2 28 4.5 V23.5 Q28 26 25.5 26 H2.5 Q0 26 0 23.5 Z" fill="#dcaa3b"/><path d="M0 8.5 Q0 6 2.5 6 H13 L16 4 H25.5 Q28 4 28 6.5 V23.5 Q28 26 25.5 26 H2.5 Q0 26 0 23.5 Z" fill="#f4c244"/><text x="17.3" y="29.2" text-anchor="middle" font-family="Liberation Sans" font-size="40.5" fill="#111" stroke="#111" stroke-width="0.9" style="paint-order:stroke">?</text></svg>
<div class="t" style="left:136px;top:89.55px;font-size:22.5px;line-height:22.5px;letter-spacing:0.4px;">.local</div>
<svg class="r" style="left:96px;top:122px" width="34" height="34" viewBox="0 0 34 34"><rect x="2" y="3" width="28" height="24" rx="2.5" fill="#dde3ec"/><path d="M0 2.5 Q0 0 2.5 0 H13 L16 2 H25.5 Q28 2 28 4.5 V23.5 Q28 26 25.5 26 H2.5 Q0 26 0 23.5 Z" fill="#dcaa3b"/><path d="M0 8.5 Q0 6 2.5 6 H13 L16 4 H25.5 Q28 4 28 6.5 V23.5 Q28 26 25.5 26 H2.5 Q0 26 0 23.5 Z" fill="#f4c244"/><text x="17.3" y="29.2" text-anchor="middle" font-family="Liberation Sans" font-size="40.5" fill="#111" stroke="#111" stroke-width="0.9" style="paint-order:stroke">?</text></svg>
<div class="t" style="left:136px;top:127.55px;font-size:22.5px;line-height:22.5px;letter-spacing:0.4px;">.opcache</div>
<svg class="r" style="left:96px;top:160px" width="34" height="34" viewBox="0 0 34 34"><rect x="2" y="3" width="28" height="24" rx="2.5" fill="#dde3ec"/><path d="M0 2.5 Q0 0 2.5 0 H13 L16 2 H25.5 Q28 2 28 4.5 V23.5 Q28 26 25.5 26 H2.5 Q0 26 0 23.5 Z" fill="#dcaa3b"/><path d="M0 8.5 Q0 6 2.5 6 H13 L16 4 H25.5 Q28 4 28 6.5 V23.5 Q28 26 25.5 26 H2.5 Q0 26 0 23.5 Z" fill="#f4c244"/><text x="17.3" y="29.2" text-anchor="middle" font-family="Liberation Sans" font-size="40.5" fill="#111" stroke="#111" stroke-width="0.9" style="paint-order:stroke">?</text></svg>
<div class="t" style="left:136px;top:165.55px;font-size:22.5px;line-height:22.5px;letter-spacing:0.4px;">.subversion</div>
<svg class="r" style="left:96px;top:198px" width="34" height="34" viewBox="0 0 34 34"><rect x="2" y="3" width="28" height="24" rx="2.5" fill="#dde3ec"/><path d="M0 2.5 Q0 0 2.5 0 H13 L16 2 H25.5 Q28 2 28 4.5 V23.5 Q28 26 25.5 26 H2.5 Q0 26 0 23.5 Z" fill="#dcaa3b"/><path d="M0 8.5 Q0 6 2.5 6 H13 L16 4 H25.5 Q28 4 28 6.5 V23.5 Q28 26 25.5 26 H2.5 Q0 26 0 23.5 Z" fill="#f4c244"/><text x="17.3" y="29.2" text-anchor="middle" font-family="Liberation Sans" font-size="40.5" fill="#111" stroke="#111" stroke-width="0.9" style="paint-order:stroke">?</text></svg>
<div class="t" style="left:136px;top:203.55px;font-size:22.5px;line-height:22.5px;letter-spacing:0.4px;">Example</div>
<svg class="r" style="left:96px;top:236px" width="34" height="34" viewBox="0 0 34 34"><rect x="2" y="3" width="28" height="24" rx="2.5" fill="#dde3ec"/><path d="M0 2.5 Q0 0 2.5 0 H13 L16 2 H25.5 Q28 2 28 4.5 V23.5 Q28 26 25.5 26 H2.5 Q0 26 0 23.5 Z" fill="#dcaa3b"/><path d="M0 8.5 Q0 6 2.5 6 H13 L16 4 H25.5 Q28 4 28 6.5 V23.5 Q28 26 25.5 26 H2.5 Q0 26 0 23.5 Z" fill="#f4c244"/><text x="17.3" y="29.2" text-anchor="middle" font-family="Liberation Sans" font-size="40.5" fill="#111" stroke="#111" stroke-width="0.9" style="paint-order:stroke">?</text></svg>
<div class="t" style="left:136px;top:241.55px;font-size:22.5px;line-height:22.5px;letter-spacing:0.4px;">_ProviderRestore</div>
<svg class="r" style="left:96px;top:274px" width="34" height="34" viewBox="0 0 34 34"><rect x="2" y="3" width="28" height="24" rx="2.5" fill="#dde3ec"/><path d="M0 2.5 Q0 0 2.5 0 H13 L16 2 H25.5 Q28 2 28 4.5 V23.5 Q28 26 25.5 26 H2.5 Q0 26 0 23.5 Z" fill="#dcaa3b"/><path d="M0 8.5 Q0 6 2.5 6 H13 L16 4 H25.5 Q28 4 28 6.5 V23.5 Q28 26 25.5 26 H2.5 Q0 26 0 23.5 Z" fill="#f4c244"/><text x="17.3" y="29.2" text-anchor="middle" font-family="Liberation Sans" font-size="40.5" fill="#111" stroke="#111" stroke-width="0.9" style="paint-order:stroke">?</text></svg>
<div class="t" style="left:136px;top:279.55px;font-size:22.5px;line-height:22.5px;letter-spacing:0.4px;">administrator</div>
<svg class="r" style="left:96px;top:312px" width="34" height="34" viewBox="0 0 34 34"><rect x="2" y="3" width="28" height="24" rx="2.5" fill="#dde3ec"/><path d="M0 2.5 Q0 0 2.5 0 H13 L16 2 H25.5 Q28 2 28 4.5 V23.5 Q28 26 25.5 26 H2.5 Q0 26 0 23.5 Z" fill="#dcaa3b"/><path d="M0 8.5 Q0 6 2.5 6 H13 L16 4 H25.5 Q28 4 28 6.5 V23.5 Q28 26 25.5 26 H2.5 Q0 26 0 23.5 Z" fill="#f4c244"/><text x="17.3" y="29.2" text-anchor="middle" font-family="Liberation Sans" font-size="40.5" fill="#111" stroke="#111" stroke-width="0.9" style="paint-order:stroke">?</text></svg>
<div class="t" style="left:136px;top:317.55px;font-size:22.5px;line-height:22.5px;letter-spacing:0.4px;">alexa</div>
</div>
<div class="r" style="left:894px;top:742px;width:1492px;height:2px;background:#a9a9a9;"></div>
<div class="r" style="left:894px;top:744px;width:1492px;height:6px;background:#e9e9e9;"></div>
<div class="r" style="left:894px;top:750px;width:1492px;height:2px;background:#a9a9a9;"></div>
<div class="r" style="left:0px;top:752px;width:884px;height:463px;overflow:hidden;background:#ffffff;">
<div class="r" style="left:854px;top:0px;width:30px;height:463px;background:#f9f9f9;border-left:1px solid #e6e6e6;"></div>
<div class="r" style="left:862px;top:6px;width:16px;height:50px;background:#7f7f7f;border-radius:8px;"></div>
<div class="t" style="left:1px;top:7.55px;font-size:22.5px;line-height:22.5px;letter-spacing:0.4px;">Filename</div>
<svg class="r" style="left:111px;top:6px" width="26" height="20" viewBox="0 0 26 20"><path d="M3 14 L12.5 4.5 L22 14" stroke="#555" stroke-width="4" fill="none"/></svg>
<div class="r" style="left:328px;top:6px;width:4px;height:22px;background:#e2e2e2;"></div>
<div class="r" style="left:488px;top:6px;width:4px;height:22px;background:#e2e2e2;"></div>
<div class="r" style="left:728px;top:6px;width:4px;height:22px;background:#e2e2e2;"></div>
<div class="t" style="left:476px;transform:translateX(-100%);top:7.55px;font-size:22.5px;line-height:22.5px;letter-spacing:0.4px;">Filesize</div>
<div class="t" style="left:501px;top:7.55px;font-size:22.5px;line-height:22.5px;letter-spacing:0.4px;">Filetype</div>
<div class="r" style="left:742px;top:0px;width:109px;height:34px;overflow:hidden;">
<div class="t" style="left:0px;top:7.55px;font-size:22.5px;line-height:22.5px;letter-spacing:0.4px;">Last modified</div>
</div>
<div class="r" style="left:0px;top:33px;width:854px;height:1px;background:#e6e6e6;"></div>
<div class="r" style="left:0px;top:34px;width:854px;height:429px;overflow:hidden;">
<svg class="r" style="left:-6px;top:8px" width="34" height="30" viewBox="0 0 34 30"><rect x="2" y="3" width="28" height="24" rx="2.5" fill="#dde3ec"/><path d="M0 2.5 Q0 0 2.5 0 H13 L16 2 H25.5 Q28 2 28 4.5 V23.5 Q28 26 25.5 26 H2.5 Q0 26 0 23.5 Z" fill="#dcaa3b"/><path d="M0 8.5 Q0 6 2.5 6 H13 L16 4 H25.5 Q28 4 28 6.5 V23.5 Q28 26 25.5 26 H2.5 Q0 26 0 23.5 Z" fill="#f4c244"/></svg>
<div class="t" style="left:35px;top:9.29px;font-size:28px;line-height:28px;">..</div>
<svg class="r" style="left:-6px;top:52px" width="34" height="30" viewBox="0 0 34 30"><rect x="2" y="3" width="28" height="24" rx="2.5" fill="#dde3ec"/><path d="M0 2.5 Q0 0 2.5 0 H13 L16 2 H25.5 Q28 2 28 4.5 V23.5 Q28 26 25.5 26 H2.5 Q0 26 0 23.5 Z" fill="#dcaa3b"/><path d="M0 8.5 Q0 6 2.5 6 H13 L16 4 H25.5 Q28 4 28 6.5 V23.5 Q28 26 25.5 26 H2.5 Q0 26 0 23.5 Z" fill="#f4c244"/></svg>
<div class="t" style="left:35px;top:53.29px;font-size:28px;line-height:28px;">.Trash</div>
<div class="t" style="left:493.5px;top:53.29px;font-size:28px;line-height:28px;letter-spacing:0.3px;">Directory</div>
<div class="t" style="left:732px;top:53.29px;font-size:28px;line-height:28px;">06/05/2025</div>
<svg class="r" style="left:-6px;top:96px" width="34" height="30" viewBox="0 0 34 30"><rect x="2" y="3" width="28" height="24" rx="2.5" fill="#dde3ec"/><path d="M0 2.5 Q0 0 2.5 0 H13 L16 2 H25.5 Q28 2 28 4.5 V23.5 Q28 26 25.5 26 H2.5 Q0 26 0 23.5 Z" fill="#dcaa3b"/><path d="M0 8.5 Q0 6 2.5 6 H13 L16 4 H25.5 Q28 4 28 6.5 V23.5 Q28 26 25.5 26 H2.5 Q0 26 0 23.5 Z" fill="#f4c244"/></svg>
<div class="t" style="left:35px;top:97.29px;font-size:28px;line-height:28px;">.android</div>
<div class="t" style="left:493.5px;top:97.29px;font-size:28px;line-height:28px;letter-spacing:0.3px;">Directory</div>
<div class="t" style="left:732px;top:97.29px;font-size:28px;line-height:28px;">08/07/2024</div>
<svg class="r" style="left:-6px;top:140px" width="34" height="30" viewBox="0 0 34 30"><rect x="2" y="3" width="28" height="24" rx="2.5" fill="#dde3ec"/><path d="M0 2.5 Q0 0 2.5 0 H13 L16 2 H25.5 Q28 2 28 4.5 V23.5 Q28 26 25.5 26 H2.5 Q0 26 0 23.5 Z" fill="#dcaa3b"/><path d="M0 8.5 Q0 6 2.5 6 H13 L16 4 H25.5 Q28 4 28 6.5 V23.5 Q28 26 25.5 26 H2.5 Q0 26 0 23.5 Z" fill="#f4c244"/></svg>
<div class="t" style="left:35px;top:141.29px;font-size:28px;line-height:28px;">.cache</div>
<div class="t" style="left:493.5px;top:141.29px;font-size:28px;line-height:28px;letter-spacing:0.3px;">Directory</div>
<div class="t" style="left:732px;top:141.29px;font-size:28px;line-height:28px;">01/11/2023</div>
<svg class="r" style="left:-6px;top:184px" width="34" height="30" viewBox="0 0 34 30"><rect x="2" y="3" width="28" height="24" rx="2.5" fill="#dde3ec"/><path d="M0 2.5 Q0 0 2.5 0 H13 L16 2 H25.5 Q28 2 28 4.5 V23.5 Q28 26 25.5 26 H2.5 Q0 26 0 23.5 Z" fill="#dcaa3b"/><path d="M0 8.5 Q0 6 2.5 6 H13 L16 4 H25.5 Q28 4 28 6.5 V23.5 Q28 26 25.5 26 H2.5 Q0 26 0 23.5 Z" fill="#f4c244"/></svg>
<div class="t" style="left:35px;top:185.29px;font-size:28px;line-height:28px;">.composer</div>
<div class="t" style="left:493.5px;top:185.29px;font-size:28px;line-height:28px;letter-spacing:0.3px;">Directory</div>
<div class="t" style="left:732px;top:185.29px;font-size:28px;line-height:28px;">13/11/2024</div>
<svg class="r" style="left:-6px;top:228px" width="34" height="30" viewBox="0 0 34 30"><rect x="2" y="3" width="28" height="24" rx="2.5" fill="#dde3ec"/><path d="M0 2.5 Q0 0 2.5 0 H13 L16 2 H25.5 Q28 2 28 4.5 V23.5 Q28 26 25.5 26 H2.5 Q0 26 0 23.5 Z" fill="#dcaa3b"/><path d="M0 8.5 Q0 6 2.5 6 H13 L16 4 H25.5 Q28 4 28 6.5 V23.5 Q28 26 25.5 26 H2.5 Q0 26 0 23.5 Z" fill="#f4c244"/></svg>
<div class="t" style="left:35px;top:229.29px;font-size:28px;line-height:28px;">.config</div>
<div class="t" style="left:493.5px;top:229.29px;font-size:28px;line-height:28px;letter-spacing:0.3px;">Directory</div>
<div class="t" style="left:732px;top:229.29px;font-size:28px;line-height:28px;">10/02/2025</div>
<svg class="r" style="left:-6px;top:272px" width="34" height="30" viewBox="0 0 34 30"><rect x="2" y="3" width="28" height="24" rx="2.5" fill="#dde3ec"/><path d="M0 2.5 Q0 0 2.5 0 H13 L16 2 H25.5 Q28 2 28 4.5 V23.5 Q28 26 25.5 26 H2.5 Q0 26 0 23.5 Z" fill="#dcaa3b"/><path d="M0 8.5 Q0 6 2.5 6 H13 L16 4 H25.5 Q28 4 28 6.5 V23.5 Q28 26 25.5 26 H2.5 Q0 26 0 23.5 Z" fill="#f4c244"/></svg>
<div class="t" style="left:35px;top:273.29px;font-size:28px;line-height:28px;">.cups</div>
<div class="t" style="left:493.5px;top:273.29px;font-size:28px;line-height:28px;letter-spacing:0.3px;">Directory</div>
<div class="t" style="left:732px;top:273.29px;font-size:28px;line-height:28px;">05/04/2025</div>
<svg class="r" style="left:-6px;top:316px" width="34" height="30" viewBox="0 0 34 30"><rect x="2" y="3" width="28" height="24" rx="2.5" fill="#dde3ec"/><path d="M0 2.5 Q0 0 2.5 0 H13 L16 2 H25.5 Q28 2 28 4.5 V23.5 Q28 26 25.5 26 H2.5 Q0 26 0 23.5 Z" fill="#dcaa3b"/><path d="M0 8.5 Q0 6 2.5 6 H13 L16 4 H25.5 Q28 4 28 6.5 V23.5 Q28 26 25.5 26 H2.5 Q0 26 0 23.5 Z" fill="#f4c244"/></svg>
<div class="t" style="left:35px;top:317.29px;font-size:28px;line-height:28px;">.cursor</div>
<div class="t" style="left:493.5px;top:317.29px;font-size:28px;line-height:28px;letter-spacing:0.3px;">Directory</div>
<div class="t" style="left:732px;top:317.29px;font-size:28px;line-height:28px;">30/04/2025</div>
<svg class="r" style="left:-6px;top:360px" width="34" height="30" viewBox="0 0 34 30"><rect x="2" y="3" width="28" height="24" rx="2.5" fill="#dde3ec"/><path d="M0 2.5 Q0 0 2.5 0 H13 L16 2 H25.5 Q28 2 28 4.5 V23.5 Q28 26 25.5 26 H2.5 Q0 26 0 23.5 Z" fill="#dcaa3b"/><path d="M0 8.5 Q0 6 2.5 6 H13 L16 4 H25.5 Q28 4 28 6.5 V23.5 Q28 26 25.5 26 H2.5 Q0 26 0 23.5 Z" fill="#f4c244"/></svg>
<div class="t" style="left:35px;top:361.29px;font-size:28px;line-height:28px;">.docker</div>
<div class="t" style="left:493.5px;top:361.29px;font-size:28px;line-height:28px;letter-spacing:0.3px;">Directory</div>
<div class="t" style="left:732px;top:361.29px;font-size:28px;line-height:28px;">17/02/2025</div>
<svg class="r" style="left:-6px;top:404px" width="34" height="30" viewBox="0 0 34 30"><rect x="2" y="3" width="28" height="24" rx="2.5" fill="#dde3ec"/><path d="M0 2.5 Q0 0 2.5 0 H13 L16 2 H25.5 Q28 2 28 4.5 V23.5 Q28 26 25.5 26 H2.5 Q0 26 0 23.5 Z" fill="#dcaa3b"/><path d="M0 8.5 Q0 6 2.5 6 H13 L16 4 H25.5 Q28 4 28 6.5 V23.5 Q28 26 25.5 26 H2.5 Q0 26 0 23.5 Z" fill="#f4c244"/></svg>
<div class="t" style="left:35px;top:405.29px;font-size:28px;line-height:28px;">.gradle</div>
<div class="t" style="left:493.5px;top:405.29px;font-size:28px;line-height:28px;letter-spacing:0.3px;">Directory</div>
<div class="t" style="left:732px;top:405.29px;font-size:28px;line-height:28px;">08/07/2024</div>
</div>
</div>
<div class="r" style="left:0px;top:1215px;width:856px;height:27px;background:#f9f9f9;border-top:1px solid #ececec;"></div>
<div class="r" style="left:856px;top:1215px;width:28px;height:27px;background:#f0f0f0;"></div>
<div class="r" style="left:-8px;top:1222px;width:749px;height:16px;background:#7f7f7f;border-radius:8px;"></div>
<div class="r" style="left:894px;top:752px;width:1492px;height:492px;overflow:hidden;background:#ffffff;">
<div class="r" style="left:1466px;top:0px;width:26px;height:492px;background:#f9f9f9;border-left:1px solid #e6e6e6;"></div>
<div class="r" style="left:1474px;top:6px;width:16px;height:298px;background:#7f7f7f;border-radius:8px;"></div>
<div class="r" style="left:0px;top:6px;width:2px;height:22px;background:#e2e2e2;"></div>
<div class="t" style="left:11px;top:7.55px;font-size:22.5px;line-height:22.5px;letter-spacing:0.4px;">Filename</div>
<svg class="r" style="left:121px;top:6px" width="26" height="20" viewBox="0 0 26 20"><path d="M3 14 L12.5 4.5 L22 14" stroke="#555" stroke-width="4" fill="none"/></svg>
<div class="r" style="left:298px;top:6px;width:4px;height:22px;background:#e2e2e2;"></div>
<div class="r" style="left:448px;top:6px;width:4px;height:22px;background:#e2e2e2;"></div>
<div class="r" style="left:608px;top:6px;width:4px;height:22px;background:#e2e2e2;"></div>
<div class="r" style="left:808px;top:6px;width:4px;height:22px;background:#e2e2e2;"></div>
<div class="r" style="left:968px;top:6px;width:4px;height:22px;background:#e2e2e2;"></div>
<div class="r" style="left:1137px;top:6px;width:4px;height:22px;background:#e2e2e2;"></div>
<div class="r" style="left:1462px;top:6px;width:4px;height:22px;background:#e2e2e2;"></div>
<div class="t" style="left:436px;transform:translateX(-100%);top:7.55px;font-size:22.5px;line-height:22.5px;letter-spacing:0.4px;">Filesize</div>
<div class="t" style="left:462px;top:7.55px;font-size:22.5px;line-height:22.5px;letter-spacing:0.4px;">Filetype</div>
<div class="t" style="left:622px;top:7.55px;font-size:22.5px;line-height:22.5px;letter-spacing:0.4px;">Last modified</div>
<div class="t" style="left:822px;top:7.55px;font-size:22.5px;line-height:22.5px;letter-spacing:0.4px;">Permissions</div>
<div class="t" style="left:982px;top:7.55px;font-size:22.5px;line-height:22.5px;letter-spacing:0.4px;">Owner/Group</div>
<div class="r" style="left:0px;top:33px;width:1466px;height:1px;background:#e6e6e6;"></div>
<svg class="r" style="left:4px;top:42px" width="34" height="30" viewBox="0 0 34 30"><rect x="2" y="3" width="28" height="24" rx="2.5" fill="#dde3ec"/><path d="M0 2.5 Q0 0 2.5 0 H13 L16 2 H25.5 Q28 2 28 4.5 V23.5 Q28 26 25.5 26 H2.5 Q0 26 0 23.5 Z" fill="#dcaa3b"/><path d="M0 8.5 Q0 6 2.5 6 H13 L16 4 H25.5 Q28 4 28 6.5 V23.5 Q28 26 25.5 26 H2.5 Q0 26 0 23.5 Z" fill="#f4c244"/></svg>
<div class="t" style="left:45px;top:43.29px;font-size:28px;line-height:28px;">..</div>
<svg class="r" style="left:4px;top:86px" width="34" height="30" viewBox="0 0 34 30"><rect x="2" y="3" width="28" height="24" rx="2.5" fill="#dde3ec"/><path d="M0 2.5 Q0 0 2.5 0 H13 L16 2 H25.5 Q28 2 28 4.5 V23.5 Q28 26 25.5 26 H2.5 Q0 26 0 23.5 Z" fill="#dcaa3b"/><path d="M0 8.5 Q0 6 2.5 6 H13 L16 4 H25.5 Q28 4 28 6.5 V23.5 Q28 26 25.5 26 H2.5 Q0 26 0 23.5 Z" fill="#f4c244"/></svg>
<div class="t" style="left:45px;top:87.29px;font-size:28px;line-height:28px;">.composer</div>
<div class="t" style="left:453px;top:87.29px;font-size:28px;line-height:28px;letter-spacing:0.3px;">Directory</div>
<div class="t" style="left:612px;top:87.29px;font-size:28px;line-height:28px;">23/05/2024 1...</div>
<div class="t" style="left:812px;top:87.29px;font-size:28px;line-height:28px;letter-spacing:0.6px;">drwx---r-x</div>
<div class="t" style="left:972px;top:87.29px;font-size:28px;line-height:28px;">11055609 ...</div>
<svg class="r" style="left:4px;top:130px" width="34" height="30" viewBox="0 0 34 30"><rect x="2" y="3" width="28" height="24" rx="2.5" fill="#dde3ec"/><path d="M0 2.5 Q0 0 2.5 0 H13 L16 2 H25.5 Q28 2 28 4.5 V23.5 Q28 26 25.5 26 H2.5 Q0 26 0 23.5 Z" fill="#dcaa3b"/><path d="M0 8.5 Q0 6 2.5 6 H13 L16 4 H25.5 Q28 4 28 6.5 V23.5 Q28 26 25.5 26 H2.5 Q0 26 0 23.5 Z" fill="#f4c244"/></svg>
<div class="t" style="left:45px;top:131.29px;font-size:28px;line-height:28px;">.local</div>
<div class="t" style="left:453px;top:131.29px;font-size:28px;line-height:28px;letter-spacing:0.3px;">Directory</div>
<div class="t" style="left:612px;top:131.29px;font-size:28px;line-height:28px;">20/08/2024 1...</div>
<div class="t" style="left:812px;top:131.29px;font-size:28px;line-height:28px;letter-spacing:0.6px;">drwx---r-x</div>
<div class="t" style="left:972px;top:131.29px;font-size:28px;line-height:28px;">11055609 ...</div>
<svg class="r" style="left:4px;top:174px" width="34" height="30" viewBox="0 0 34 30"><rect x="2" y="3" width="28" height="24" rx="2.5" fill="#dde3ec"/><path d="M0 2.5 Q0 0 2.5 0 H13 L16 2 H25.5 Q28 2 28 4.5 V23.5 Q28 26 25.5 26 H2.5 Q0 26 0 23.5 Z" fill="#dcaa3b"/><path d="M0 8.5 Q0 6 2.5 6 H13 L16 4 H25.5 Q28 4 28 6.5 V23.5 Q28 26 25.5 26 H2.5 Q0 26 0 23.5 Z" fill="#f4c244"/></svg>
<div class="t" style="left:45px;top:175.29px;font-size:28px;line-height:28px;">.opcache</div>
<div class="t" style="left:453px;top:175.29px;font-size:28px;line-height:28px;letter-spacing:0.3px;">Directory</div>
<div class="t" style="left:612px;top:175.29px;font-size:28px;line-height:28px;">08/05/2025 0...</div>
<div class="t" style="left:812px;top:175.29px;font-size:28px;line-height:28px;letter-spacing:0.6px;">drwxrwxr-x</div>
<div class="t" style="left:972px;top:175.29px;font-size:28px;line-height:28px;">43 600</div>
<svg class="r" style="left:4px;top:218px" width="34" height="30" viewBox="0 0 34 30"><rect x="2" y="3" width="28" height="24" rx="2.5" fill="#dde3ec"/><path d="M0 2.5 Q0 0 2.5 0 H13 L16 2 H25.5 Q28 2 28 4.5 V23.5 Q28 26 25.5 26 H2.5 Q0 26 0 23.5 Z" fill="#dcaa3b"/><path d="M0 8.5 Q0 6 2.5 6 H13 L16 4 H25.5 Q28 4 28 6.5 V23.5 Q28 26 25.5 26 H2.5 Q0 26 0 23.5 Z" fill="#f4c244"/></svg>
<div class="t" style="left:45px;top:219.29px;font-size:28px;line-height:28px;">.subversion</div>
<div class="t" style="left:453px;top:219.29px;font-size:28px;line-height:28px;letter-spacing:0.3px;">Directory</div>
<div class="t" style="left:612px;top:219.29px;font-size:28px;line-height:28px;">19/08/2024 1...</div>
<div class="t" style="left:812px;top:219.29px;font-size:28px;line-height:28px;letter-spacing:0.6px;">drwx---r-x</div>
<div class="t" style="left:972px;top:219.29px;font-size:28px;line-height:28px;">11055609 ...</div>
<svg class="r" style="left:4px;top:262px" width="34" height="30" viewBox="0 0 34 30"><rect x="2" y="3" width="28" height="24" rx="2.5" fill="#dde3ec"/><path d="M0 2.5 Q0 0 2.5 0 H13 L16 2 H25.5 Q28 2 28 4.5 V23.5 Q28 26 25.5 26 H2.5 Q0 26 0 23.5 Z" fill="#dcaa3b"/><path d="M0 8.5 Q0 6 2.5 6 H13 L16 4 H25.5 Q28 4 28 6.5 V23.5 Q28 26 25.5 26 H2.5 Q0 26 0 23.5 Z" fill="#f4c244"/></svg>
<div class="t" style="left:45px;top:263.29px;font-size:28px;line-height:28px;">Example</div>
<div class="t" style="left:453px;top:263.29px;font-size:28px;line-height:28px;letter-spacing:0.3px;">Directory</div>
<div class="t" style="left:612px;top:263.29px;font-size:28px;line-height:28px;">25/09/2024 1...</div>
<div class="t" style="left:812px;top:263.29px;font-size:28px;line-height:28px;letter-spacing:0.6px;">drwx---r-x</div>
<div class="t" style="left:972px;top:263.29px;font-size:28px;line-height:28px;">11055609 ...</div>
<svg class="r" style="left:4px;top:306px" width="34" height="30" viewBox="0 0 34 30"><rect x="2" y="3" width="28" height="24" rx="2.5" fill="#dde3ec"/><path d="M0 2.5 Q0 0 2.5 0 H13 L16 2 H25.5 Q28 2 28 4.5 V23.5 Q28 26 25.5 26 H2.5 Q0 26 0 23.5 Z" fill="#dcaa3b"/><path d="M0 8.5 Q0 6 2.5 6 H13 L16 4 H25.5 Q28 4 28 6.5 V23.5 Q28 26 25.5 26 H2.5 Q0 26 0 23.5 Z" fill="#f4c244"/></svg>
<div class="t" style="left:45px;top:307.29px;font-size:28px;line-height:28px;">_ProviderRestore</div>
<div class="t" style="left:453px;top:307.29px;font-size:28px;line-height:28px;letter-spacing:0.3px;">Directory</div>
<div class="t" style="left:612px;top:307.29px;font-size:28px;line-height:28px;">16/05/2022 1...</div>
<div class="t" style="left:812px;top:307.29px;font-size:28px;line-height:28px;letter-spacing:1.4px;">drwx------</div>
<div class="t" style="left:972px;top:307.29px;font-size:28px;line-height:28px;">11055609 ...</div>
<svg class="r" style="left:4px;top:350px" width="34" height="30" viewBox="0 0 34 30"><rect x="2" y="3" width="28" height="24" rx="2.5" fill="#dde3ec"/><path d="M0 2.5 Q0 0 2.5 0 H13 L16 2 H25.5 Q28 2 28 4.5 V23.5 Q28 26 25.5 26 H2.5 Q0 26 0 23.5 Z" fill="#dcaa3b"/><path d="M0 8.5 Q0 6 2.5 6 H13 L16 4 H25.5 Q28 4 28 6.5 V23.5 Q28 26 25.5 26 H2.5 Q0 26 0 23.5 Z" fill="#f4c244"/></svg>
<div class="t" style="left:45px;top:351.29px;font-size:28px;line-height:28px;">administrator</div>
<div class="t" style="left:453px;top:351.29px;font-size:28px;line-height:28px;letter-spacing:0.3px;">Directory</div>
<div class="t" style="left:612px;top:351.29px;font-size:28px;line-height:28px;letter-spacing:-0.35px;">21/01/2019 11...</div>
<div class="t" style="left:812px;top:351.29px;font-size:28px;line-height:28px;letter-spacing:0.6px;">drwx---r-x</div>
<div class="t" style="left:972px;top:351.29px;font-size:28px;line-height:28px;">11055609 ...</div>
<svg class="r" style="left:4px;top:394px" width="34" height="30" viewBox="0 0 34 30"><rect x="2" y="3" width="28" height="24" rx="2.5" fill="#dde3ec"/><path d="M0 2.5 Q0 0 2.5 0 H13 L16 2 H25.5 Q28 2 28 4.5 V23.5 Q28 26 25.5 26 H2.5 Q0 26 0 23.5 Z" fill="#dcaa3b"/><path d="M0 8.5 Q0 6 2.5 6 H13 L16 4 H25.5 Q28 4 28 6.5 V23.5 Q28 26 25.5 26 H2.5 Q0 26 0 23.5 Z" fill="#f4c244"/></svg>
<div class="t" style="left:45px;top:395.29px;font-size:28px;line-height:28px;">alexa</div>
<div class="t" style="left:453px;top:395.29px;font-size:28px;line-height:28px;letter-spacing:0.3px;">Directory</div>
<div class="t" style="left:612px;top:395.29px;font-size:28px;line-height:28px;">25/09/2024 1...</div>
<div class="t" style="left:812px;top:395.29px;font-size:28px;line-height:28px;letter-spacing:0.6px;">drwxr-xr-x</div>
<div class="t" style="left:972px;top:395.29px;font-size:28px;line-height:28px;">11055609 ...</div>
<svg class="r" style="left:4px;top:438px" width="34" height="30" viewBox="0 0 34 30"><rect x="2" y="3" width="28" height="24" rx="2.5" fill="#dde3ec"/><path d="M0 2.5 Q0 0 2.5 0 H13 L16 2 H25.5 Q28 2 28 4.5 V23.5 Q28 26 25.5 26 H2.5 Q0 26 0 23.5 Z" fill="#dcaa3b"/><path d="M0 8.5 Q0 6 2.5 6 H13 L16 4 H25.5 Q28 4 28 6.5 V23.5 Q28 26 25.5 26 H2.5 Q0 26 0 23.5 Z" fill="#f4c244"/></svg>
<div class="t" style="left:45px;top:439.29px;font-size:28px;line-height:28px;">clickandbuilds</div>
<div class="t" style="left:453px;top:439.29px;font-size:28px;line-height:28px;letter-spacing:0.3px;">Directory</div>
<div class="t" style="left:612px;top:439.29px;font-size:28px;line-height:28px;">02/10/2024 1...</div>
<div class="t" style="left:812px;top:439.29px;font-size:28px;line-height:28px;letter-spacing:0.6px;">drwxr-xr-x</div>
<div class="t" style="left:972px;top:439.29px;font-size:28px;line-height:28px;">11055609 ...</div>
<svg class="r" style="left:4px;top:482px" width="34" height="30" viewBox="0 0 34 30"><rect x="2" y="3" width="28" height="24" rx="2.5" fill="#dde3ec"/><path d="M0 2.5 Q0 0 2.5 0 H13 L16 2 H25.5 Q28 2 28 4.5 V23.5 Q28 26 25.5 26 H2.5 Q0 26 0 23.5 Z" fill="#dcaa3b"/><path d="M0 8.5 Q0 6 2.5 6 H13 L16 4 H25.5 Q28 4 28 6.5 V23.5 Q28 26 25.5 26 H2.5 Q0 26 0 23.5 Z" fill="#f4c244"/></svg>
<div class="t" style="left:45px;top:483.29px;font-size:28px;line-height:28px;">cliqiabemar</div>
<div class="t" style="left:453px;top:483.29px;font-size:28px;line-height:28px;letter-spacing:0.3px;">Directory</div>
<div class="t" style="left:612px;top:483.29px;font-size:28px;line-height:28px;">13/06/2023 1...</div>
<div class="t" style="left:812px;top:483.29px;font-size:28px;line-height:28px;letter-spacing:0.6px;">drwxr-xr-x</div>
<div class="t" style="left:972px;top:483.29px;font-size:28px;line-height:28px;">11055609 ...</div>
</div>
<div class="r" style="left:0px;top:1242px;width:884px;height:44px;overflow:hidden;background:#f0f0f0;">
<div class="t" style="left:-1px;top:10.14px;font-size:27px;line-height:27px;letter-spacing:0.27px;">27 files and 47 directories. Total size: 94,302 bytes</div>
</div>
<div class="r" style="left:894px;top:1244px;width:1492px;height:42px;overflow:hidden;background:#f0f0f0;">
<div class="t" style="left:10px;top:8.14px;font-size:27px;line-height:27px;letter-spacing:0.08px;">4 files and 11 directories. Total size: 2,996,128 bytes</div>
</div>
<div class="r" style="left:0px;top:1286px;width:2386px;height:2px;background:#a9a9a9;"></div>
</body></html>
